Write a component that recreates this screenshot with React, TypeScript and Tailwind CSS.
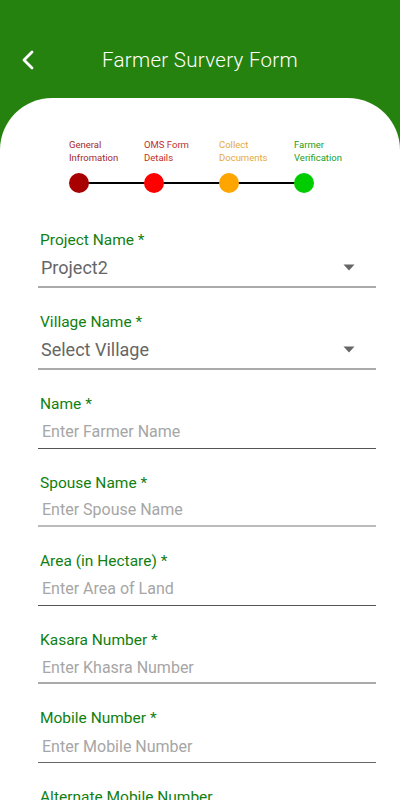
import React from "react";

const steps = [
  { l1: "General", l2: "Infromation", text: "text-[#a52a2a]", dot: "bg-[#a80000]" },
  { l1: "OMS Form", l2: "Details", text: "text-[#c0302a]", dot: "bg-[#ff0000]" },
  { l1: "Collect", l2: "Documents", text: "text-[#e6a93a]", dot: "bg-[#ffa500]" },
  { l1: "Farmer", l2: "Verification", text: "text-[#22a022]", dot: "bg-[#00cc00]" },
];

function Caret() {
  return (
    <svg width="12" height="7" viewBox="0 0 12 7" className="mr-[21px]">
      <path d="M0.5 0.5 L11.5 0.5 L6 6.5 Z" fill="#666" />
    </svg>
  );
}

function Dropdown({ label, value }: { label: string; value: string }) {
  return (
    <div className="ml-[38px] mr-[24px] mb-[24px]">
      <div className="pl-[2px] text-[15.5px] leading-[20px] text-[#118011]">{label}</div>
      <div className="flex items-center justify-between pl-[3px] h-[38px] border-b-2 border-[#aaaaaa] pb-[2px]">
        <span className="text-[18px] text-[#666666]">{value}</span>
        <Caret />
      </div>
    </div>
  );
}

function TextField({ label, placeholder, line }: { label: string; placeholder: string; line: string }) {
  return (
    <div className="ml-[38px] mr-[24px] mb-[24px]">
      <div className="pl-[2px] text-[15.5px] leading-[20px] text-[#118011]">{label}</div>
      <div className={`pl-[4px] h-[34.6px] flex items-center pt-[3px] ${line}`}>
        <span className="text-[16px] text-[#a6a6a6]">{placeholder}</span>
      </div>
    </div>
  );
}

export default function App() {
  return (
    <div className="w-[400px] h-[800px] overflow-hidden bg-[#25820f]" style={{ fontFamily: "Roboto, 'Noto Sans', sans-serif" }}>
      <div className="h-[98px] relative flex items-center justify-center pt-[22px]">
        <svg width="14" height="20" viewBox="0 0 14 20" className="absolute left-[21px] top-[50px]">
          <path d="M11 2 L3 10 L11 18" stroke="white" strokeWidth="2.8" fill="none" strokeLinecap="round" strokeLinejoin="round" />
        </svg>
        <span className="text-white text-[20.5px] font-light tracking-[0.3px]">Farmer Survery Form</span>
      </div>
      <div className="bg-white rounded-t-[52px] h-[702px] pt-[41px]">
        <div className="relative w-[300px] ml-[69px]">
          <div className="flex">
            {steps.map((s) => (
              <div key={s.l1} className={`w-[75px] text-[9.5px] leading-[12.5px] ${s.text}`}>
                <div>{s.l1}</div>
                <div>{s.l2}</div>
              </div>
            ))}
          </div>
          <div className="relative h-[20px] mt-[9px]">
            <div className="absolute left-[10px] top-[9px] w-[225px] h-[2px] bg-black" />
            <div className="flex">
              {steps.map((s) => (
                <div key={s.l1} className="w-[75px]">
                  <div className={`relative w-[20px] h-[20px] rounded-full ${s.dot}`} />
                </div>
              ))}
            </div>
          </div>
        </div>
        <div className="mt-[37px]">
          <Dropdown label="Project Name *" value="Project2" />
          <Dropdown label="Village Name *" value="Select Village" />
          <TextField label="Name *" placeholder="Enter Farmer Name" line="border-b border-[#555555]" />
          <TextField label="Spouse Name *" placeholder="Enter Spouse Name" line="border-b-2 border-[#bbbbbb]" />
          <TextField label="Area (in Hectare) *" placeholder="Enter Area of Land" line="border-b border-[#555555]" />
          <TextField label="Kasara Number *" placeholder="Enter Khasra Number" line="border-b-2 border-[#aaaaaa]" />
          <TextField label="Mobile Number *" placeholder="Enter Mobile Number" line="border-b border-[#666666]" />
          <TextField label="Alternate Mobile Number" placeholder="Enter Alternate Mobile Number" line="border-b border-[#666666]" />
        </div>
      </div>
    </div>
  );
}
